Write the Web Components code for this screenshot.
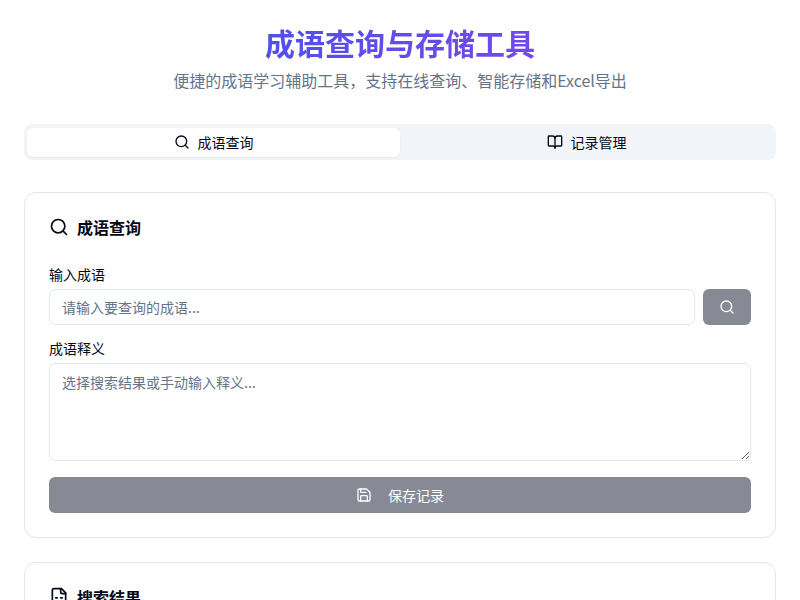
<!DOCTYPE html>
<html lang="zh">
<head>
<meta charset="utf-8">
<title>成语查询与存储工具</title>
<style>
html, body { margin: 0; background: #fff; }
body {
    font-family: "Noto Sans CJK SC", sans-serif;
    color: #020817;
    overflow: hidden;
    height: 600px;
}
</style>
</head>
<body>
<app-page>
    <page-header slot="header" heading="成语查询与存储工具" sub="便捷的成语学习辅助工具，支持在线查询、智能存储和Excel导出"></page-header>
    <tab-bar></tab-bar>
    <idiom-card icon="search" heading="成语查询">
        <query-form></query-form>
    </idiom-card>
    <idiom-card icon="sheet" heading="搜索结果"></idiom-card>
</app-page>

<script>
(function () {
    const icons = {
        search: '<circle cx="11" cy="11" r="8"/><path d="m21 21-4.3-4.3"/>',
        book: '<path d="M12 7v14"/><path d="M3 18a1 1 0 0 1-1-1V4a1 1 0 0 1 1-1h5a4 4 0 0 1 4 4 4 4 0 0 1 4-4h5a1 1 0 0 1 1 1v13a1 1 0 0 1-1 1h-6a3 3 0 0 0-3 3 3 3 0 0 0-3-3z"/>',
        save: '<path d="M15.2 3a2 2 0 0 1 1.4.6l3.8 3.8a2 2 0 0 1 .6 1.4V19a2 2 0 0 1-2 2H5a2 2 0 0 1-2-2V5a2 2 0 0 1 2-2z"/><path d="M17 21v-7a1 1 0 0 0-1-1H8a1 1 0 0 0-1 1v7"/><path d="M7 3v4a1 1 0 0 0 1 1h7"/>',
        sheet: '<path d="M15 2H6a2 2 0 0 0-2 2v16a2 2 0 0 0 2 2h12a2 2 0 0 0 2-2V7Z"/><path d="M14 2v4a2 2 0 0 0 2 2h4"/><path d="M8 13h2"/><path d="M14 13h2"/><path d="M8 17h2"/><path d="M14 17h2"/>'
    };

    function svg(name, size) {
        return `<svg width="${size}" height="${size}" viewBox="0 0 24 24" fill="none" stroke="currentColor" stroke-width="2" stroke-linecap="round" stroke-linejoin="round">${icons[name]}</svg>`;
    }

    class AppPage extends HTMLElement {
        constructor() {
            super();
            this.attachShadow({ mode: 'open' }).innerHTML = `
<style>
:host {
    display: flex;
    flex-direction: column;
    padding: 24px;
    gap: 24px;
}
</style>
<slot name="header"></slot>
<slot></slot>`;
        }
    }

    class PageHeader extends HTMLElement {
        constructor() {
            super();
            this.attachShadow({ mode: 'open' }).innerHTML = `
<style>
:host {
    display: block;
    text-align: center;
    padding-bottom: 8px;
}
h1 {
    margin: 0 auto 8px;
    font-size: 30px;
    line-height: 36px;
    font-weight: 700;
    width: fit-content;
    background: linear-gradient(135deg, #4f50ea, #7548ea);
    -webkit-background-clip: text;
    background-clip: text;
    color: transparent;
}
p {
    margin: 0;
    font-size: 16px;
    line-height: 24px;
    color: #64748b;
}
</style>
<h1>${this.getAttribute('heading')}</h1>
<p>${this.getAttribute('sub')}</p>`;
        }
    }

    class TabBar extends HTMLElement {
        constructor() {
            super();
            this.attachShadow({ mode: 'open' }).innerHTML = `
<style>
:host {
    display: grid;
    grid-template-columns: 1fr 1fr;
    height: 36px;
    box-sizing: border-box;
    padding: 4px 3px 3px;
    margin-bottom: 8px;
    background: #f1f5f9;
    border-radius: 8px;
}
div {
    display: flex;
    align-items: center;
    justify-content: center;
    gap: 8px;
    font-size: 14px;
    border-radius: 6px;
    padding-bottom: 2px;
    box-sizing: border-box;
}
.on {
    background: #fff;
    box-shadow: 0 1px 2px rgba(0, 0, 0, .05);
}
svg { display: block; }
</style>
<div class="on">${svg('search', 16)}<span>成语查询</span></div>
<div>${svg('book', 16)}<span>记录管理</span></div>`;
        }
    }

    class IdiomCard extends HTMLElement {
        constructor() {
            super();
            this.attachShadow({ mode: 'open' }).innerHTML = `
<style>
:host {
    display: block;
    border: 1px solid #e2e8f0;
    border-radius: 12px;
    background: #fff;
    padding: 24px;
    box-shadow: 0 1px 2px rgba(0, 0, 0, .02);
}
h2 {
    margin: 0 0 27px;
    display: flex;
    align-items: center;
    gap: 8px;
    font-size: 16px;
    line-height: 20px;
    height: 20px;
    font-weight: 600;
}
svg { display: block; }
</style>
<h2>${svg(this.getAttribute('icon'), 20)}<span>${this.getAttribute('heading')}</span></h2>
<slot></slot>`;
        }
    }

    class QueryForm extends HTMLElement {
        constructor() {
            super();
            this.attachShadow({ mode: 'open' }).innerHTML = `
<style>
:host {
    display: flex;
    flex-direction: column;
    font-size: 14px;
}
label {
    display: block;
    line-height: 20px;
    height: 20px;
    margin-bottom: 5px;
}
.row {
    display: flex;
    gap: 8px;
    margin-bottom: 13px;
}
input, textarea {
    box-sizing: border-box;
    border: 1px solid #e2e8f0;
    border-radius: 6px;
    background: #fff;
    font: inherit;
    color: inherit;
    outline: none;
}
input::placeholder, textarea::placeholder { color: #64748b; opacity: 1; }
input {
    flex: 1;
    min-width: 0;
    height: 36px;
    padding: 0 12px;
}
textarea {
    display: block;
    width: 100%;
    height: 98px;
    padding: 8px 12px;
    line-height: 20px;
    margin-bottom: 16px;
}
button {
    display: flex;
    align-items: center;
    justify-content: center;
    height: 36px;
    border: 0;
    border-radius: 6px;
    background: #878a94;
    color: #fff;
    font: inherit;
    padding: 0;
}
.find { width: 48px; }
.save { width: 100%; gap: 16px; }
svg { display: block; }
</style>
<label>输入成语</label>
<div class="row">
    <input placeholder="请输入要查询的成语...">
    <button class="find">${svg('search', 16)}</button>
</div>
<label>成语释义</label>
<textarea placeholder="选择搜索结果或手动输入释义..."></textarea>
<button class="save">${svg('save', 16)}<span>保存记录</span></button>`;
        }
    }

    customElements.define('app-page', AppPage);
    customElements.define('page-header', PageHeader);
    customElements.define('tab-bar', TabBar);
    customElements.define('idiom-card', IdiomCard);
    customElements.define('query-form', QueryForm);
})();
</script>
</body>
</html>
